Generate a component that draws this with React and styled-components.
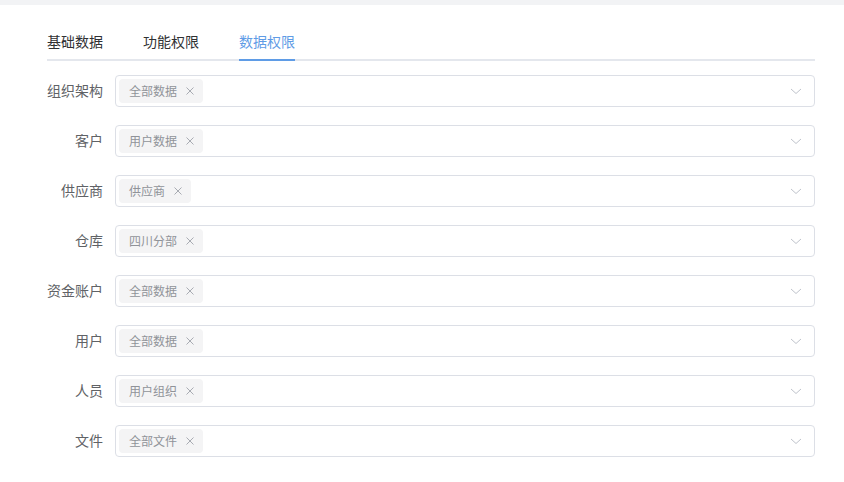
import React from 'react'
import styled, { createGlobalStyle } from 'styled-components'

const theme = {
  text: '#303133',
  label: '#606266',
  muted: '#909399',
  border: '#dcdfe6',
  primary: '#5f9ce6',
  tagBg: '#f4f4f5',
}

const GlobalStyle = createGlobalStyle`
  html, body {
    margin: 0;
    padding: 0;
    background: #ffffff;
    font-family: "Noto Sans CJK SC", "Noto Sans", sans-serif;
  }
`

const TopBand = styled.div`
  height: 5px;
  background: #f2f3f5;
`

const Page = styled.div`
  padding: 0 29px 0 47px;
`

const Tabs = styled.div`
  display: flex;
  gap: 40px;
  margin-top: 25px;
  border-bottom: 2px solid #e4e7ed;
`

const Tab = styled.div`
  position: relative;
  font-size: 14px;
  line-height: 22px;
  padding-bottom: 7px;
  color: ${props => (props.active ? theme.primary : theme.text)};
  &::after {
    content: '';
    display: ${props => (props.active ? 'block' : 'none')};
    position: absolute;
    left: 0;
    right: 0;
    bottom: -2px;
    height: 2px;
    background: ${theme.primary};
  }
`

const Form = styled.div`
  display: flex;
  flex-direction: column;
  gap: 18px;
  margin-top: 14px;
  margin-left: -12px;
`

const Row = styled.div`
  display: flex;
  align-items: center;
`

const Label = styled.div`
  width: 68px;
  padding-right: 12px;
  padding-bottom: 2px;
  text-align: right;
  font-size: 14px;
  color: ${theme.label};
`

const Select = styled.div`
  flex: 1;
  height: 32px;
  box-sizing: border-box;
  border: 1px solid ${theme.border};
  border-radius: 4px;
  display: flex;
  align-items: center;
  padding: 0 12px 0 3px;
`

const Tag = styled.span`
  display: inline-flex;
  align-items: center;
  gap: 9px;
  height: 24px;
  box-sizing: border-box;
  padding: 0 9px 1px 10px;
  background: ${theme.tagBg};
  border-radius: 4px;
  font-size: 12px;
  color: ${theme.muted};
`

const Close = styled.svg`
  width: 8px;
  height: 8px;
  margin-top: 1px;
`

const Chevron = styled.svg`
  margin-left: auto;
  width: 12px;
  height: 12px;
`

const rows = [
  ['组织架构', '全部数据'],
  ['客户', '用户数据'],
  ['供应商', '供应商'],
  ['仓库', '四川分部'],
  ['资金账户', '全部数据'],
  ['用户', '全部数据'],
  ['人员', '用户组织'],
  ['文件', '全部文件'],
]

const App = () => (
  <>
    <GlobalStyle />
    <TopBand />
    <Page>
      <Tabs>
        <Tab>基础数据</Tab>
        <Tab>功能权限</Tab>
        <Tab active>数据权限</Tab>
      </Tabs>
      <Form>
        {rows.map(([label, tag]) => (
          <Row key={label}>
            <Label>{label}</Label>
            <Select>
              <Tag>
                {tag}
                <Close viewBox="0 0 8 8" fill="none">
                  <path d="M0.5 0.5l7 7M7.5 0.5l-7 7" stroke="#a8abb2" strokeWidth="1" />
                </Close>
              </Tag>
              <Chevron viewBox="0 0 12 12" fill="none">
                <path d="M1 4l5 4.5L11 4" stroke="#c0c4cc" strokeWidth="1" />
              </Chevron>
            </Select>
          </Row>
        ))}
      </Form>
    </Page>
  </>
)

export default App
